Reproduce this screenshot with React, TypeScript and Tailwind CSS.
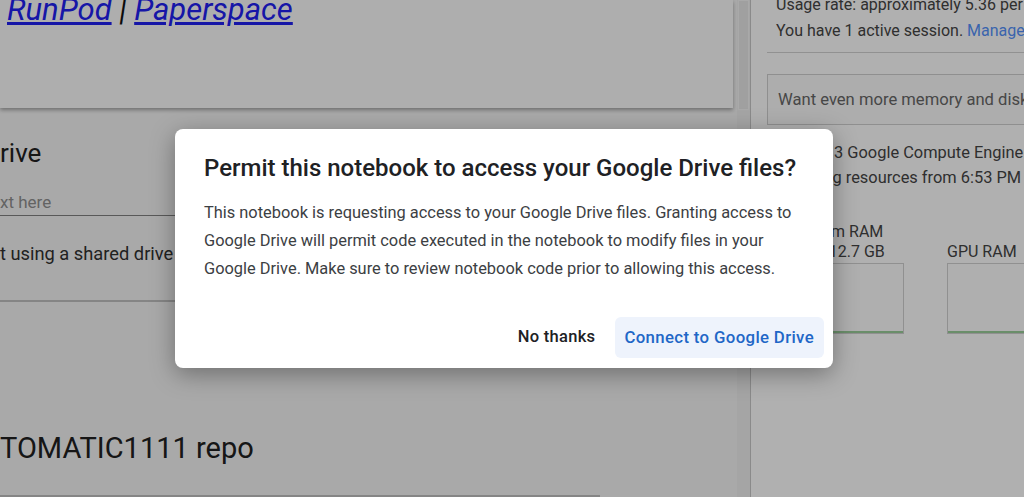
import React from 'react';

const font = { fontFamily: 'Roboto, "Noto Sans", Arial, sans-serif' };

function LeftPane() {
    return (
        <div className="flex w-[737px] shrink-0 flex-col bg-[#f3f3f3]">
            <div className="mr-[4px] h-[108px] shrink-0 bg-[#fafafa] pl-[7px] shadow-[0_2px_4px_rgba(0,0,0,0.35)]">
                <div className="-mt-[7px] text-[31px] italic leading-[34px] text-[#111] whitespace-nowrap">
                    <a className="text-[#2020f0] underline">RunPod</a>
                    <span> | </span>
                    <a className="text-[#2020f0] underline">Paperspace</a>
                </div>
            </div>
            <div className="mt-[28px] text-[26px] leading-[34px] text-[#202020]">
                rive
            </div>
            <div className="mt-[22px] w-[600px] border-b border-[#808080] pb-[3px] text-[17px] leading-[20px] text-[#8e8e8e]">
                xt here
            </div>
            <div className="mt-[27px] text-[18.3px] leading-[22px] text-[#303030]">
                t using a shared drive
            </div>
            <div className="mt-[35px] h-[2px] w-[600px] bg-[#bfbfbf]" />
            <div className="mt-[129px] text-[29px] leading-[34px] text-[#202020]">
                TOMATIC1111 repo
            </div>
            <div className="mt-[30px] h-[2px] w-[600px] bg-[#bfbfbf]" />
        </div>
    );
}

function Scrollbar() {
    return (
        <div className="flex w-[14px] shrink-0 flex-col border-r border-[#c6c6c6] bg-[#ececec]">
            <div className="mx-[1px] h-[110px] border border-[#f2f2f2] bg-[#e6e6e6]" />
        </div>
    );
}

function MemoryBox({ label, value, width }: { label: string; value?: string; width: string }) {
    return (
        <div className={`flex flex-col ${width}`}>
            <div className="text-[16px] leading-[20px] text-[#444] whitespace-nowrap">{label}</div>
            {value && (
                <div className="text-[16px] leading-[20px] text-[#444] whitespace-nowrap">{value}</div>
            )}
            <div className="mt-[1px] flex h-[71px] flex-col justify-end border border-[#cfcfcf] bg-[#fbfbfb]">
                <div className="h-[2px] bg-[#98cc98]" />
            </div>
        </div>
    );
}

function RightPane() {
    return (
        <div className="flex flex-1 flex-col bg-[#fdfdfd] pl-[16px]">
            <div className="-mt-[8px] pl-[9px] text-[16px] leading-[26px] text-[#444] whitespace-nowrap">
                <div>Usage rate: approximately 5.36 per hour</div>
                <div>
                    You have 1 active session.{' '}
                    <span className="text-[#5490f8]">Manage sessions</span>
                </div>
            </div>
            <div className="mt-[8px] h-px bg-[#d0d0d0]" />
            <div className="mt-[21px] h-[51px] border border-[#cdcdcd] bg-[#f8f8f8] pl-[10px] text-[16.6px] leading-[49px] text-[#666] whitespace-nowrap">
                Want even more memory and disk space?
            </div>
            <div className="mt-[15px] pl-[12px] text-[16.4px] leading-[25px] text-[#444] whitespace-nowrap">
                <div>Python 3 Google Compute Engine backend (GPU)</div>
                <div>Showing resources from 6:53 PM to 7:09 PM</div>
            </div>
            <div className="mt-[32px] flex items-end gap-[43px] pl-[25px]">
                <MemoryBox label="System RAM" value="0.8 / 12.7 GB" width="w-[112px]" />
                <MemoryBox label="GPU RAM" width="w-[100px]" />
            </div>
        </div>
    );
}

function PermitDialog() {
    return (
        <div className="absolute left-[175px] top-[129px] flex h-[239px] w-[658px] flex-col rounded-[8px] bg-white pl-[29px] pr-[9px] pt-[25px] shadow-[0_6px_24px_rgba(0,0,0,0.35)]">
            <h2 className="text-[24px] font-medium leading-[28px] text-[#202124] whitespace-nowrap">
                Permit this notebook to access your Google Drive files?
            </h2>
            <div className="mt-[17px] text-[16.4px] leading-[28px] text-[#3c4043] whitespace-nowrap">
                <div>
                    This notebook is requesting access to your Google Drive files. Granting access to
                </div>
                <div>
                    Google Drive will permit code executed in the notebook to modify files in your
                </div>
                <div>
                    Google Drive. Make sure to review notebook code prior to allowing this access.
                </div>
            </div>
            <div className="mt-auto mb-[10px] flex items-center justify-end gap-[11px]">
                <button className="h-[41px] rounded-[6px] px-[9px] text-[16.5px] font-medium tracking-[0.3px] text-[#202124]">
                    No thanks
                </button>
                <button className="h-[41px] rounded-[6px] bg-[#eef3fc] pl-[9px] pr-[10px] text-[16.8px] font-medium tracking-[0.35px] text-[#1f67c7]">
                    Connect to Google Drive
                </button>
            </div>
        </div>
    );
}

export default function App() {
    return (
        <div className="relative flex h-[497px] w-[1024px] overflow-hidden" style={font}>
            <LeftPane />
            <Scrollbar />
            <RightPane />
            <div className="absolute inset-0 bg-black/30" />
            <PermitDialog />
        </div>
    );
}
